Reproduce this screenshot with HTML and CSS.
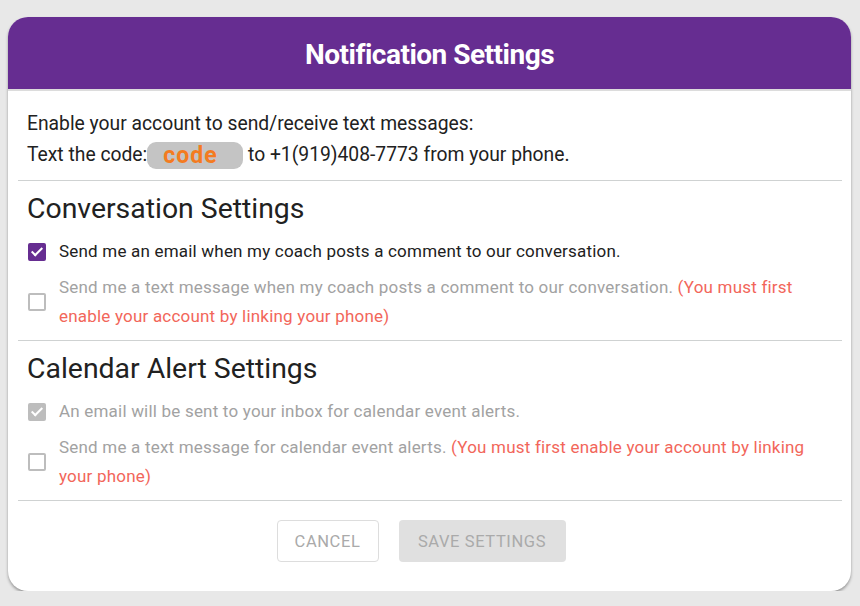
FILE: index.html
```html
<!DOCTYPE html>
<html lang="en">
<head>
    <meta charset="UTF-8">
    <meta name="viewport" content="width=device-width, initial-scale=1.0">
    <title>Notification Settings</title>
    <link rel="stylesheet" href="styles.css">
</head>
<body>

    <div class="card">
        <div class="card-header">
            <h2>Notification Settings</h2>
        </div>

        <div class="card-body">
            <div class="section intro">
                <p>Enable your account to send/receive text messages:</p>
                <p>Text the code:<span class="code">code</span> to +1(919)408-7773 from your phone.</p>
            </div>

            <div class="section">
                <h3>Conversation Settings</h3>
                <label class="option">
                    <span class="box checked"></span>
                    <span class="text">Send me an email when my coach posts a comment to our conversation.</span>
                </label>
                <label class="option disabled">
                    <span class="box"></span>
                    <span class="text">Send me a text message when my coach posts a comment to our conversation. <span class="warn">(You must first enable your account by linking your phone)</span></span>
                </label>
            </div>

            <div class="section">
                <h3>Calendar Alert Settings</h3>
                <label class="option disabled">
                    <span class="box checked"></span>
                    <span class="text">An email will be sent to your inbox for calendar event alerts.</span>
                </label>
                <label class="option disabled">
                    <span class="box"></span>
                    <span class="text">Send me a text message for calendar event alerts. <span class="warn">(You must first enable your account by linking your phone)</span></span>
                </label>
            </div>

            <div class="actions">
                <button class="btn btn-outline" disabled>Cancel</button>
                <button class="btn btn-fill" disabled>Save Settings</button>
            </div>
        </div>
    </div>

</body>
</html>
```

FILE: styles.css
```css
body {
    font-family: "Roboto", "Liberation Sans", sans-serif;
    background-color: #e8e8e8;
    color: #212121;
    margin: 0;
    padding: 17px 9px 0 8px;
}
.card {
    background: #ffffff;
    border-radius: 20px;
    box-shadow: 0px 2px 3px rgba(0, 0, 0, 0.35);
    overflow: hidden;
}
.card-header {
    background-color: #662d91;
    height: 74px;
    box-sizing: border-box;
    padding-top: 3px;
    display: flex;
    align-items: center;
    justify-content: center;
    border-bottom: 2px solid #dcdcdc;
}
.card-header h2 {
    margin: 0;
    color: #ffffff;
    font-size: 28px;
    font-weight: bold;
    letter-spacing: -0.5px;
}
.card-body {
    padding: 0 9px 0 10px;
}
.section {
    padding: 0 9px 9px 9px;
    border-bottom: 1px solid #cfd2d2;
}
.intro {
    padding-top: 17px;
    padding-bottom: 10px;
}
.intro p {
    margin: 0;
    font-size: 19.3px;
    line-height: 31px;
}
.code {
    display: inline-block;
    background-color: #c4c4c4;
    color: #f47b20;
    font-weight: bold;
    font-size: 23px;
    letter-spacing: 1px;
    line-height: 27px;
    width: 96px;
    padding-left: 16px;
    box-sizing: border-box;
    border-radius: 9px;
    vertical-align: middle;
}
h3 {
    margin: 12px 0 12px 0;
    font-size: 28.4px;
    font-weight: normal;
    line-height: 32px;
}
.option {
    display: flex;
    align-items: center;
    gap: 13px;
    margin-bottom: 7px;
    font-size: 17px;
    letter-spacing: 0.2px;
    line-height: 29px;
}
.option:last-child {
    margin-bottom: 0;
}
.box {
    flex: none;
    width: 18px;
    height: 18px;
    margin-left: 1px;
    box-sizing: border-box;
    border: 2px solid #bdbdbd;
    border-radius: 2px;
    position: relative;
}
.box.checked {
    background-color: #662d91;
    border-color: #662d91;
}
.box.checked::after {
    content: "";
    position: absolute;
    left: 4px;
    top: 0px;
    width: 4px;
    height: 9px;
    border: solid #ffffff;
    border-width: 0 2px 2px 0;
    transform: rotate(45deg);
}
.disabled .box.checked {
    background-color: #bdbdbd;
    border-color: #bdbdbd;
}
.disabled .text {
    color: #a2a2a2;
}
.warn {
    color: #f2665a;
}
.actions {
    display: flex;
    justify-content: center;
    gap: 20px;
    padding: 19px 18px 29px 0;
}
.btn {
    font-family: "Roboto", sans-serif;
    font-size: 16.5px;
    text-transform: uppercase;
    letter-spacing: 0.6px;
    color: #aaaaaa;
    height: 42px;
    border-radius: 4px;
    padding: 0;
}
.btn-outline {
    background: #ffffff;
    border: 1px solid #dddddd;
    width: 102px;
}
.btn-fill {
    background: #e0e0e0;
    border: none;
    width: 167px;
}
```
